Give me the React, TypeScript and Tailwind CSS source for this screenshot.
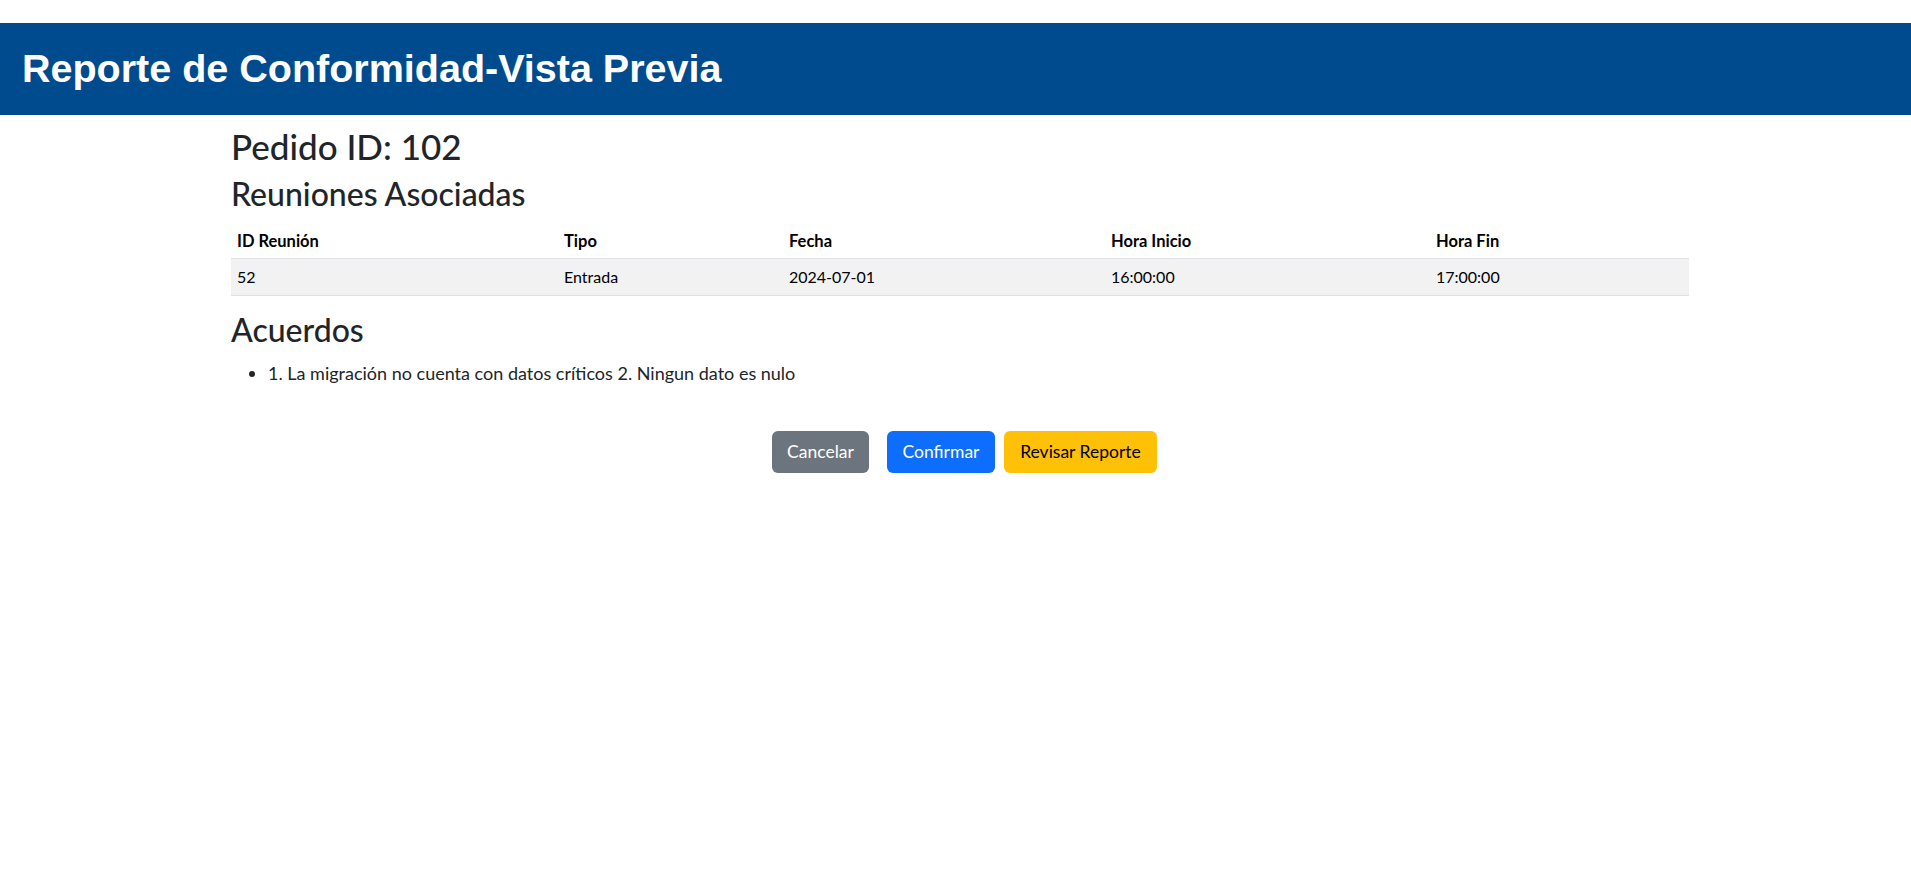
import React from "react";

const font = { fontFamily: "Lato, 'Noto Sans', sans-serif" };

export default function App() {
  return (
    <div className="min-h-screen bg-white text-[#212529]" style={font}>
      <div className="mt-[23px] flex h-[92px] items-center bg-[#004b8e] pl-[22px]">
        <h1 className="text-[39.5px] font-bold leading-[1.2] text-white" style={{ fontFamily: "'Liberation Sans', Arial, sans-serif" }}>
          Reporte de Conformidad-Vista Previa
        </h1>
      </div>
      <div className="ml-[231px] w-[1458px]">
        <h2 className="mt-[10px] text-[35px] font-medium leading-[1.2]">Pedido ID: 102</h2>
        <h3 className="mt-[8px] text-[32px] font-medium leading-[1.2]">Reuniones Asociadas</h3>
        <table className="mt-[11px] w-full border-collapse text-left text-[16px] leading-6 text-black">
          <thead>
            <tr className="border-b border-[#dee2e6]">
              <th className="w-[327px] px-[6px] py-[5px] text-[16.5px] font-bold">ID Reunión</th>
              <th className="w-[225px] px-[6px] py-[5px] text-[16.5px] font-bold">Tipo</th>
              <th className="w-[322px] px-[6px] py-[5px] text-[16.5px] font-bold">Fecha</th>
              <th className="w-[325px] px-[6px] py-[5px] text-[16.5px] font-bold">Hora Inicio</th>
              <th className="px-[6px] py-[5px] text-[16.5px] font-bold">Hora Fin</th>
            </tr>
          </thead>
          <tbody>
            <tr className="border-b border-[#dee2e6] bg-[#f2f2f2]">
              <td className="px-[6px] py-[6px]">52</td>
              <td className="px-[6px] py-[6px]">Entrada</td>
              <td className="px-[6px] py-[6px]">2024-07-01</td>
              <td className="px-[6px] py-[6px]">16:00:00</td>
              <td className="px-[6px] py-[6px]">17:00:00</td>
            </tr>
          </tbody>
        </table>
        <h3 className="mt-[15px] text-[32px] font-medium leading-[1.2]">Acuerdos</h3>
        <ul className="mt-[10px] list-disc pl-[37px] text-[18px] leading-[27px]">
          <li>1. La migración no cuenta con datos críticos 2. Ningun dato es nulo</li>
        </ul>
        <div className="mt-[44px] flex justify-center pl-[9px]">
          <button className="h-[42px] w-[97px] rounded-[6px] bg-[#6c757d] text-[17.5px] text-white">Cancelar</button>
          <button className="ml-[18px] h-[42px] w-[108px] rounded-[6px] bg-[#0d6efd] text-[17.5px] text-white">Confirmar</button>
          <button className="ml-[9px] h-[42px] w-[153px] rounded-[6px] bg-[#ffc107] text-[17.5px] text-black">Revisar Reporte</button>
        </div>
      </div>
    </div>
  );
}
